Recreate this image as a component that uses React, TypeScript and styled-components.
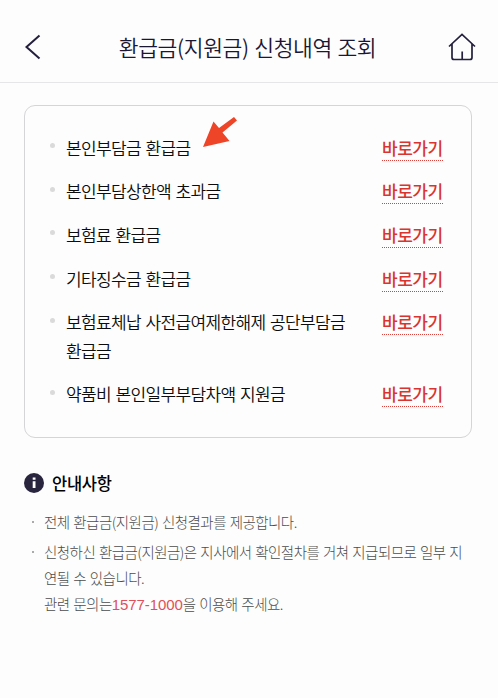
import React from "react";
import styled, { createGlobalStyle } from "styled-components";

const GlobalStyle = createGlobalStyle`
  * { box-sizing: border-box; }
  body {
    margin: 0;
    background: #fdfdfd;
    color: #111;
    font-family: "Noto Sans CJK KR", "Noto Sans", sans-serif;
    font-weight: 300;
  }
`;

const Screen = styled.main`
  min-height: 698px;
  overflow: hidden;
`;

const Header = styled.header`
  height: 83px;
  padding: 12px 22px 0 24px;
  display: flex;
  align-items: center;
  justify-content: space-between;
  border-bottom: 1px solid #e6e6e8;
`;

const IconButton = styled.button`
  display: flex;
  padding: 0;
  border: 0;
  background: none;
  color: #231f3d;
`;

const Title = styled.h1`
  margin: 0 -5px 0 0;
  color: #1b1733;
  font-size: 21.5px;
  font-weight: 350;
  line-height: 30px;
  letter-spacing: -0.35px;
  word-spacing: 1px;
  white-space: nowrap;
`;

const Card = styled.ul`
  list-style: none;
  height: 333px;
  margin: 22px 26px 0 24px;
  padding: 27.8px 28px 0 26px;
  border: 1px solid #d5d5d8;
  border-radius: 11px;
  display: flex;
  flex-direction: column;
  gap: 15.2px;
`;

const Row = styled.li`
  display: flex;
  align-items: flex-start;
  line-height: 28.4px;
`;

const Dot = styled.span`
  flex: none;
  width: 5px;
  height: 5px;
  margin: 9.5px 11px 0 -1px;
  border-radius: 50%;
  background: #dadada;
`;

const Label = styled.span`
  flex: none;
  width: 290px;
  font-size: 17px;
  font-weight: 350;
  letter-spacing: -0.64px;
  word-spacing: 1.4px;
  word-break: keep-all;
  color: #0c0c0c;
`;

const Pointer = styled.svg`
  flex: none;
  width: 36px;
  height: 32px;
  margin: -17px -36px 0 -154px;
`;

const Go = styled.a`
  margin-left: auto;
  width: 61px;
  height: 27px;
  border-bottom: 1px dotted #e0403a;
  color: #d93530;
  font-size: 17px;
  font-weight: 500;
  letter-spacing: -0.5px;
  white-space: nowrap;
`;

const Guide = styled.section`
  margin: 32px 24px 0;
`;

const GuideTitle = styled.h2`
  margin: 0;
  display: flex;
  align-items: center;
  gap: 8px;
  height: 26px;
  font-size: 16.5px;
  font-weight: 500;
  letter-spacing: -0.3px;
  color: #000;
`;

const Notes = styled.ul`
  list-style: none;
  margin: 13px 0 0;
  padding: 0;
  display: flex;
  flex-direction: column;
  gap: 4.7px;
`;

const Note = styled.li`
  display: flex;
  font-size: 14.5px;
  line-height: 25.8px;
  letter-spacing: -0.53px;
  word-spacing: 1px;
  color: #4c4c4c;
`;

const NoteDot = styled.span`
  flex: none;
  width: 2px;
  height: 2px;
  margin: 12px 10px 0 8px;
  background: #aaa;
`;

const NoteLine = styled.span`
  display: block;
  white-space: nowrap;
`;

const Phone = styled.span`
  color: #e05058;
  font-family: "Liberation Sans", sans-serif;
  font-size: 15px;
  letter-spacing: -0.08px;
`;

const items: { label: string; pointed?: boolean }[] = [
  { label: "본인부담금 환급금", pointed: true },
  { label: "본인부담상한액 초과금" },
  { label: "보험료 환급금" },
  { label: "기타징수금 환급금" },
  { label: "보험료체납 사전급여제한해제 공단부담금 환급금" },
  { label: "약품비 본인일부부담차액 지원금" },
];

export default function App() {
  return (
    <Screen>
      <GlobalStyle />
      <Header>
        <IconButton aria-label="이전">
          <svg width="18" height="26" viewBox="0 0 18 26" fill="none" stroke="currentColor" strokeWidth="2">
            <path d="M15.5 1.5 2.5 13l13 11.5" />
          </svg>
        </IconButton>
        <Title>환급금(지원금) 신청내역 조회</Title>
        <IconButton aria-label="홈">
          <svg width="28" height="28" viewBox="0 0 28 28" fill="none" stroke="currentColor" strokeWidth="1.7">
            <path d="M1 13.5 14 1.5l13 12M4 11v13.5q0 2 2 2h16q2 0 2-2V11M14.2 18.5v8" />
          </svg>
        </IconButton>
      </Header>
      <Card>
        {items.map(({ label, pointed }) => (
          <Row key={label}>
            <Dot />
            <Label>{label}</Label>
            {pointed && (
              <Pointer viewBox="0 0 36 32">
                <path d="M1 30 11.5 4.5 17 11 32 0 35 3.5 20.5 15.5 27.5 24Z" fill="#ee4528" />
              </Pointer>
            )}
            <Go>바로가기</Go>
          </Row>
        ))}
      </Card>
      <Guide>
        <GuideTitle>
          <svg width="20" height="20" viewBox="0 0 20 20">
            <circle cx="10" cy="10" r="10" fill="#29253f" />
            <path d="M8.7 4.5h2.8v2.3H8.7zM8.7 8.3h2.8V15H8.7z" fill="#fff" />
          </svg>
          안내사항
        </GuideTitle>
        <Notes>
          <Note>
            <NoteDot />
            <NoteLine>전체 환급금(지원금) 신청결과를 제공합니다.</NoteLine>
          </Note>
          <Note>
            <NoteDot />
            <div>
              <NoteLine>신청하신 환급금(지원금)은 지사에서 확인절차를 거쳐 지급되므로 일부 지</NoteLine>
              <NoteLine>연될 수 있습니다.</NoteLine>
              <NoteLine>
                관련 문의는<Phone>1577-1000</Phone>을 이용해 주세요.
              </NoteLine>
            </div>
          </Note>
        </Notes>
      </Guide>
    </Screen>
  );
}
